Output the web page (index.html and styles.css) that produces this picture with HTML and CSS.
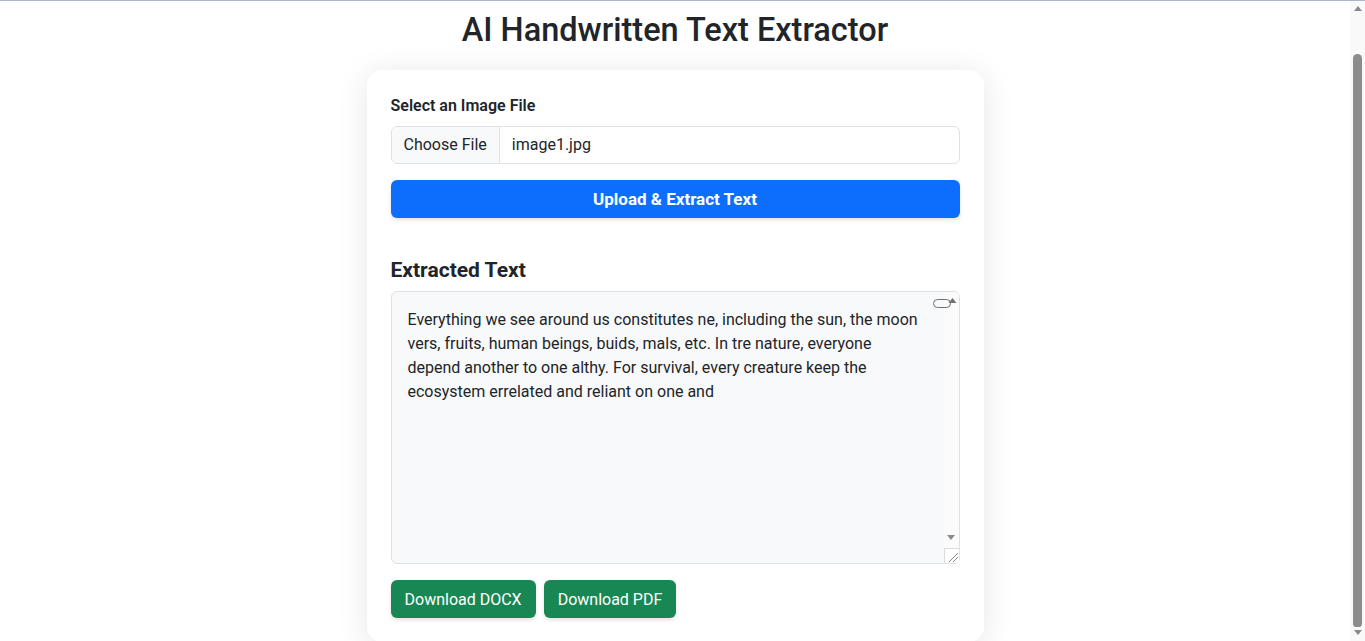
FILE: index.html
```html
<!DOCTYPE html>
<html lang="en">
<head>
<meta charset="utf-8">
<title>AI Handwritten Text Extractor</title>
<link rel="stylesheet" href="styles.css">
</head>
<body>
<main class="page">
  <h1 class="title">AI Handwritten Text Extractor</h1>
  <section class="card">
    <form class="upload-form">
      <label class="field-label">Select an Image File</label>
      <div class="file-input">
        <span class="file-btn">Choose File</span>
        <span class="file-name">image1.jpg</span>
      </div>
      <button type="button" class="btn btn-primary btn-block">Upload &amp; Extract Text</button>
    </form>
    <h2 class="section-title">Extracted Text</h2>
    <div class="text-wrap">
      <textarea class="output" rows="10">Everything we see around us constitutes ne, including the sun, the moon
vers, fruits, human beings, buids, mals, etc. In tre nature, everyone
depend another to one althy. For survival, every creature keep the
ecosystem errelated and reliant on one and</textarea>
      <div class="ta-scroll" aria-hidden="true">
        <span class="ta-arrow-down"></span>
        <span class="ta-grip">
          <svg width="14" height="14" viewBox="0 0 14 14">
            <path d="M4 13 L13 4 M8 13 L13 8" stroke="#8a8a8a" stroke-width="1" fill="none"/>
          </svg>
        </span>
      </div>
      <svg class="overlay-icon" width="24" height="13" viewBox="0 0 24 13" aria-hidden="true">
        <rect x="0.5" y="3.5" width="17" height="8" rx="4" fill="#f8f9fa" stroke="#707070" stroke-width="1"/>
        <path d="M15.5 7 L19.5 2 L23.5 7 Z" fill="#707070"/>
      </svg>
    </div>
    <div class="actions">
      <button type="button" class="btn btn-success">Download DOCX</button>
      <button type="button" class="btn btn-success">Download PDF</button>
    </div>
  </section>
</main>
<div class="page-scroll" aria-hidden="true">
  <span class="ps-arrow-up"></span>
  <span class="ps-thumb"></span>
  <span class="ps-arrow-down"></span>
</div>
</body>
</html>
```
FILE: styles.css
```css
html, body {
  height: 100%;
}
body {
  margin: 0;
  border-top: 1px solid #a9b7cc;
  box-sizing: border-box;
  background: #fff;
  color: #212529;
  font-family: Roboto, "Liberation Sans", sans-serif;
  font-size: 16px;
  line-height: 1.5;
  overflow: hidden;
}
.page {
  width: calc(100% - 15px);
  display: flex;
  flex-direction: column;
  align-items: center;
}
.title {
  margin: 10px 0 20px;
  font-size: 32.5px;
  font-weight: 500;
  line-height: 1.2;
}
.card {
  box-sizing: border-box;
  width: 617px;
  padding: 24px;
  background: #fff;
  border-radius: 15px;
  box-shadow: 0 4px 32px rgba(0, 0, 0, 0.1);
}
.upload-form {
  display: flex;
  flex-direction: column;
}
.field-label {
  font-weight: 600;
  font-size: 16px;
  margin-bottom: 8px;
}
.file-input {
  display: flex;
  align-items: stretch;
  height: 38px;
  box-sizing: border-box;
  border: 1px solid #dee2e6;
  border-radius: 6px;
  overflow: hidden;
  margin-bottom: 16px;
}
.file-btn {
  display: flex;
  align-items: center;
  padding: 0 12px;
  background: #f8f9fa;
  border-right: 1px solid #dee2e6;
}
.file-name {
  display: flex;
  align-items: center;
  padding: 0 12px;
}
.btn {
  box-sizing: border-box;
  height: 38px;
  padding: 0 12px;
  border: 1px solid transparent;
  border-radius: 6px;
  font-family: inherit;
  font-size: 16px;
  color: #fff;
  box-shadow: 0 2px 4px rgba(0, 0, 0, 0.12);
}
.btn-block {
  width: 100%;
}
.btn-primary {
  background: #0d6efd;
  font-weight: 700;
  font-size: 17px;
}
.btn-success {
  background: #198754;
  padding: 0 13px;
}
.section-title {
  margin: 40px 0 8px;
  font-size: 21px;
  font-weight: 700;
  line-height: 1.2;
}
.text-wrap {
  position: relative;
  margin-bottom: 16px;
}
.output {
  display: block;
  box-sizing: border-box;
  width: 100%;
  height: 273px;
  padding: 16px 31px 16px 16px;
  margin: 0;
  border: 1px solid #dee2e6;
  border-radius: 6px;
  background: #f8f9fa;
  color: #212529;
  font-family: inherit;
  font-size: 16px;
  line-height: 1.5;
  white-space: pre;
  overflow: hidden;
  resize: none;
}
.ta-scroll {
  position: absolute;
  top: 1px;
  right: 1px;
  bottom: 1px;
  width: 15px;
  background: #fbfbfb;
  border-top-right-radius: 5px;
  border-bottom-right-radius: 5px;
  display: flex;
  flex-direction: column;
  justify-content: flex-end;
  align-items: center;
}
.ta-arrow-down {
  width: 0;
  height: 0;
  border-left: 4.5px solid transparent;
  border-right: 4.5px solid transparent;
  border-top: 5px solid #8a8a8a;
  margin-bottom: 8px;
}
.ta-grip {
  box-sizing: border-box;
  width: 15px;
  height: 15px;
  border-left: 1px solid #dcdcdc;
  border-top: 1px solid #dcdcdc;
  background: #fff;
  display: flex;
}
.overlay-icon {
  position: absolute;
  top: 5px;
  right: 3px;
}
.actions {
  display: flex;
  gap: 8px;
}
.page-scroll {
  position: fixed;
  top: 1px;
  right: 0;
  bottom: 0;
  width: 15px;
  background: #f9f9f9;
  display: flex;
  flex-direction: column;
  align-items: center;
}
.ps-arrow-up {
  width: 0;
  height: 0;
  margin-top: 5px;
  border-left: 4.5px solid transparent;
  border-right: 4.5px solid transparent;
  border-bottom: 5px solid #8a8a8a;
}
.ps-thumb {
  flex: 1;
  width: 9px;
  margin: 43px 0 3px;
  background: #8c8c8c;
  border-radius: 5px 5px 4px 4px;
}
.ps-arrow-down {
  width: 0;
  height: 0;
  margin-bottom: 6px;
  border-left: 4.5px solid transparent;
  border-right: 4.5px solid transparent;
  border-top: 5px solid #8a8a8a;
}
```
